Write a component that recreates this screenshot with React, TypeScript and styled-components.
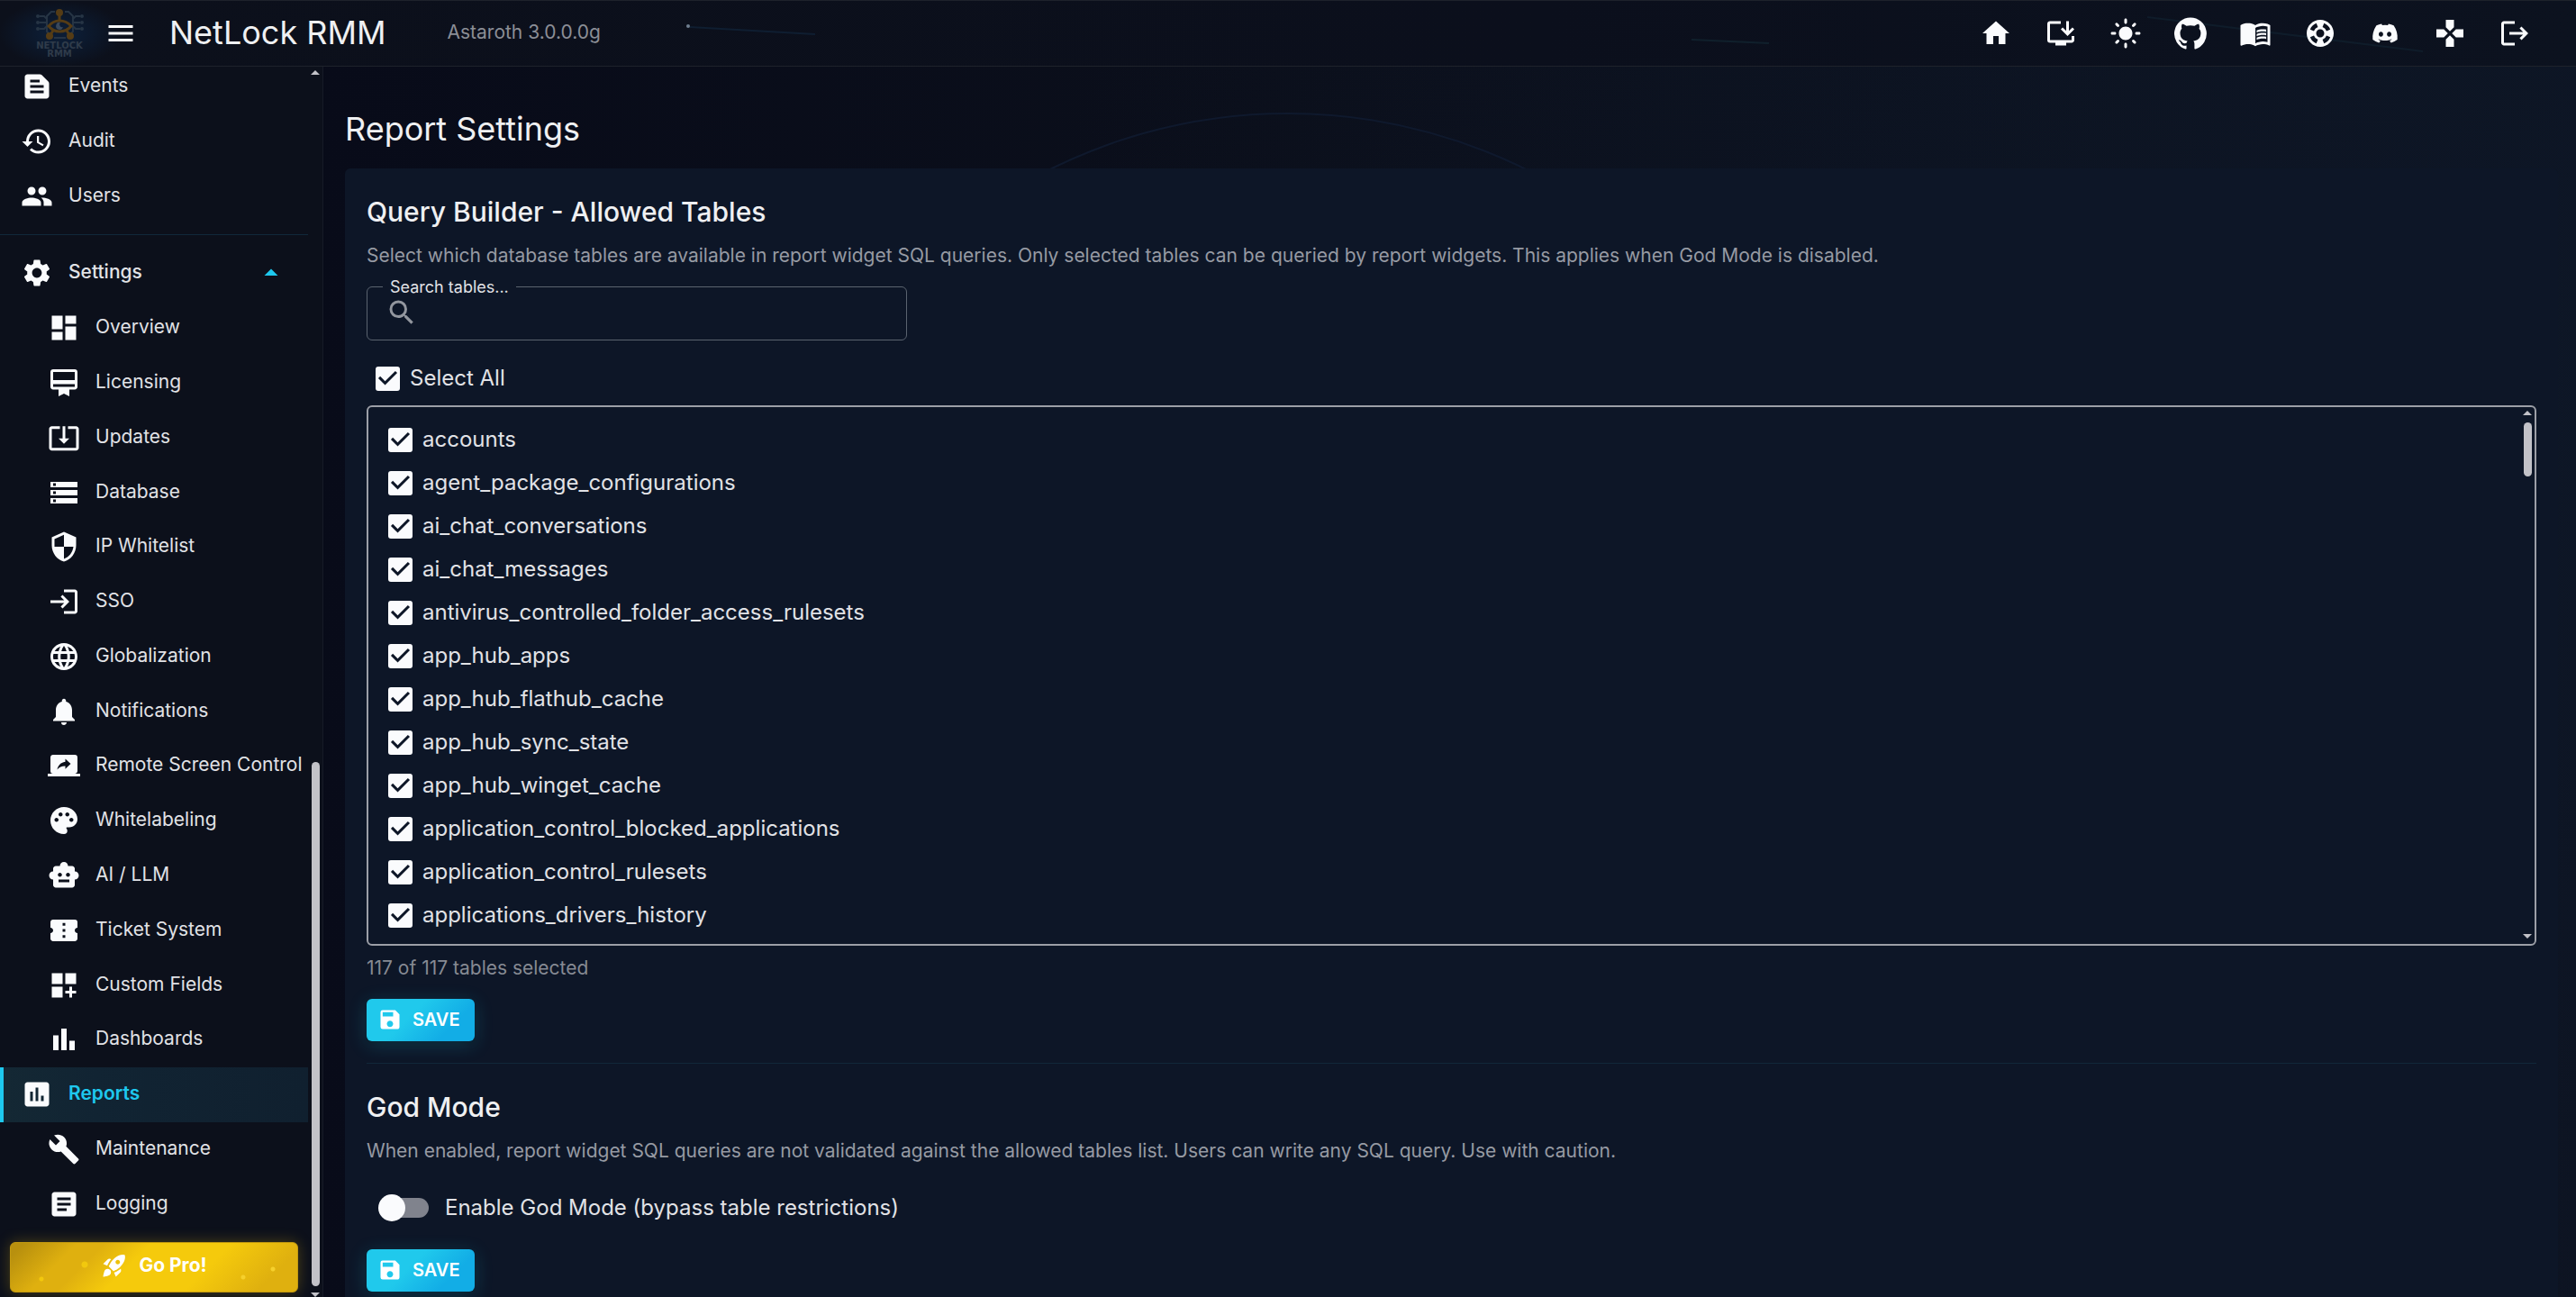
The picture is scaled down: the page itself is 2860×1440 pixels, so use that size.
import React, { useState } from "react";
import styled, { createGlobalStyle, css } from "styled-components";
import type { IconType } from "react-icons";
import {
  MdArrowDropUp,
  MdArticle,
  MdAssessment,
  MdBarChart,
  MdBuild,
  MdCardMembership,
  MdConfirmationNumber,
  MdDashboard,
  MdDashboardCustomize,
  MdGames,
  MdHistory,
  MdHome,
  MdInstallDesktop,
  MdLanguage,
  MdLightMode,
  MdLogin,
  MdLogout,
  MdMenu,
  MdMenuBook,
  MdNotifications,
  MdPalette,
  MdPeople,
  MdRocketLaunch,
  MdSave,
  MdScreenShare,
  MdSearch,
  MdSecurity,
  MdSettings,
  MdSmartToy,
  MdStorage,
  MdSupport,
  MdSystemUpdateAlt,
  MdTextSnippet,
} from "react-icons/md";
import { FaDiscord } from "react-icons/fa";

const color = {
  text: "#e1e2e6",
  heading: "#eff0f2",
  muted: "#969aa3",
  faint: "#868a93",
  icon: "#fafbfd",
  accent: "#1ec8ee",
  bar: "#0c101b",
  card: "#0d1627",
  line: "#1e222b",
  tint: "#11283a",
  scroll: "#c2c2c8",
};

const GlobalStyle = createGlobalStyle`
  *, *::before, *::after { box-sizing: border-box; }
  body {
    margin: 0;
    background: #090c1a;
    color: ${color.text};
    font-family: Inter, "Liberation Sans", sans-serif;
    font-size: 21px;
    line-height: 30px;
  }
  button, input { font: inherit; color: inherit; }
  h1, h2, p, ul { margin: 0; padding: 0; }
  ul { list-style: none; }
`;

const Shell = styled.div`
  position: relative;
  display: flex;
  flex-direction: column;
  height: 100vh;
  overflow: hidden;
  background:
    radial-gradient(ellipse 60% 90% at 100% 30%, rgba(14, 25, 42, 0.6), transparent),
    linear-gradient(90deg, #080b19 12%, #0b0f1b 50%, #0d1321 100%);
`;

const Ring = styled.div`
  position: absolute;
  top: 50%;
  left: 50%;
  width: 1190px;
  height: 1190px;
  border: 2px solid #0f192d;
  border-radius: 50%;
  transform: translate(-50%, -50%);
`;

const TopBar = styled.header`
  position: relative;
  display: flex;
  align-items: center;
  flex: none;
  height: 74px;
  padding: 0 32px 0 30px;
  background: linear-gradient(90deg, #0c101b, #0b0f1c 60%, #0c121f);
  border-top: 1px solid ${color.line};
  border-bottom: 1px solid ${color.line};
`;

const LogoGlow = styled.div`
  position: absolute;
  inset: 0 auto 0 0;
  width: 134px;
  background: radial-gradient(ellipse at center, #0c1c33 20%, rgba(12, 28, 51, 0) 72%);
`;

const Streaks = styled.svg`
  position: absolute;
  inset: 0;
  width: 100%;
  height: 100%;
  pointer-events: none;
`;

const Logo = styled.svg`
  position: relative;
  width: 72px;
  height: 60px;
  flex: none;
`;

const IconButton = styled.button<{ $width: number }>`
  position: relative;
  display: flex;
  align-items: center;
  justify-content: center;
  width: ${(p) => p.$width}px;
  height: 60px;
  padding: 0;
  border: 0;
  background: none;
  color: ${color.icon};
  cursor: pointer;
`;

const Brand = styled.div`
  padding: 0 0 2px 22px;
  font-size: 36px;
  line-height: 48px;
  color: ${color.heading};
`;

const Version = styled.div`
  flex: 1;
  padding: 0 0 2px 68px;
  color: #8b8e96;
`;

const Body = styled.div`
  position: relative;
  display: flex;
  flex: 1;
  min-height: 0;
`;

const Sidebar = styled.aside`
  display: flex;
  flex: none;
  width: 359px;
  overflow: hidden;
  background: ${color.bar};
  border-right: 1px solid #161b27;
`;

const SideContent = styled.nav`
  display: flex;
  flex-direction: column;
  flex: 1;
  min-width: 0;
  min-height: 0;
  margin-top: -9px;
  padding-bottom: 5px;
`;

const NavList = styled.ul<{ $fill?: boolean }>`
  display: flex;
  flex-direction: column;
  flex: ${(p) => (p.$fill ? "1" : "none")};
`;

const NavItem = styled.li<{ $height: number }>`
  display: flex;
  flex: 1 0 auto;
  min-height: ${(p) => p.$height}px;
`;

const NavLink = styled.a<{ $nested?: boolean; $active?: boolean; $strong?: boolean }>`
  display: flex;
  align-items: center;
  flex: 1;
  gap: 17px;
  padding-left: ${(p) => (p.$nested ? 53 : 23)}px;
  color: ${color.text};
  font-weight: ${(p) => (p.$strong ? 500 : 400)};
  text-decoration: none;
  white-space: nowrap;
  svg { flex: none; color: ${color.icon}; }
  ${(p) =>
    p.$active &&
    css`
      padding-left: 19px;
      border-left: 4px solid ${color.accent};
      background: linear-gradient(90deg, #142834, #112433 30%, #10202f);
      color: ${color.accent};
      font-weight: 600;
    `}
`;

const NavText = styled.span`
  flex: 1;
  padding-bottom: 2px;
`;

const Caret = styled.span`
  display: flex;
  padding-right: 23px;
  svg { color: ${color.accent}; }
`;

const Rule = styled.hr<{ $gap: number }>`
  width: 100%;
  height: 1px;
  margin: ${(p) => p.$gap}px 0;
  border: 0;
  background: ${color.tint};
`;

const GoPro = styled.button`
  position: relative;
  display: flex;
  align-items: center;
  justify-content: center;
  gap: 12px;
  height: 56px;
  margin: 12px 11px 0;
  padding: 0 0 4px;
  border: 1px solid #c49a10;
  border-radius: 6px;
  background:
    radial-gradient(circle at 34px 40px, #f2c80d 2px, transparent 3px),
    radial-gradient(circle at 82px 24px, #f2c80d 3px, transparent 4px),
    radial-gradient(circle at 258px 38px, #f6d02c 2px, transparent 3px),
    radial-gradient(circle at 291px 29px, #f6d02c 2px, transparent 3px),
    linear-gradient(135deg, #b8900e 4%, #dfb00f 20%, #dfb00f 28%, #f5ca0c 42%, #f5ca0c 66%, #dfb00f 88%);
  box-shadow: 0 0 16px rgba(222, 176, 16, 0.3);
  color: #fff;
  font-weight: 700;
  cursor: pointer;
`;

const Track = styled.div`
  display: flex;
  flex-direction: column;
  align-items: center;
  flex: none;
  width: 16px;
  padding: 4px 0 0;
`;

const Arrow = styled.i<{ $down?: boolean }>`
  flex: none;
  border: 5px solid transparent;
  border-top: ${(p) => (p.$down ? `5px solid ${color.scroll}` : "0")};
  border-bottom: ${(p) => (p.$down ? "0" : `5px solid ${color.scroll}`)};
`;

const Spacer = styled.div<{ $grow: number }>`
  flex: ${(p) => p.$grow} 1 0;
`;

const Thumb = styled.div<{ $grow: number }>`
  flex: ${(p) => p.$grow} 1 0;
  width: 9px;
  border-radius: 5px;
  background: ${color.scroll};
`;

const Main = styled.main`
  display: flex;
  flex-direction: column;
  flex: 1;
  min-width: 0;
  padding: 41px 20px 0 24px;
`;

const PageTitle = styled.h1`
  margin-bottom: 15px;
  font-size: 36px;
  font-weight: 400;
  line-height: 57px;
  color: ${color.heading};
`;

const Card = styled.section`
  flex: 1 0 auto;
  padding: 24px;
  border-radius: 6px;
  background: ${color.card};
`;

const SectionTitle = styled.h2`
  font-size: 30px;
  font-weight: 500;
  line-height: 48px;
  color: ${color.heading};
`;

const Hint = styled.p`
  margin-top: 10px;
  color: ${color.muted};
`;

const SearchField = styled.div`
  position: relative;
  display: flex;
  align-items: center;
  width: 600px;
  height: 60px;
  margin-top: 19px;
  padding: 0 20px;
  border: 1px solid #5a636f;
  border-radius: 6px;
  svg { flex: none; margin-bottom: 2px; color: #92969e; }
`;

const SearchLabel = styled.label`
  position: absolute;
  top: -14px;
  left: 17px;
  padding: 0 8px;
  background: ${color.card};
  font-size: 18px;
  line-height: 28px;
`;

const SearchInput = styled.input`
  flex: 1;
  min-width: 0;
  padding: 0 8px;
  border: 0;
  outline: 0;
  background: transparent;
`;

const CheckRow = styled.label`
  display: flex;
  align-items: center;
  gap: 11px;
  height: 48px;
  font-size: 24px;
  cursor: pointer;
`;

const SelectAll = styled.div`
  display: flex;
  margin: 18px 0 6px;
  padding-left: 10px;
`;

const Tick = styled.input`
  appearance: none;
  flex: none;
  width: 27px;
  height: 27px;
  margin: 0;
  border: 3px solid ${color.icon};
  border-radius: 3px;
  cursor: pointer;
  &:checked { border: 0; background: ${color.icon}; }
  &:checked::before {
    content: "";
    display: block;
    width: 100%;
    height: 100%;
    background: ${color.card};
    clip-path: polygon(39% 78%, 11% 50%, 19% 42%, 39% 62%, 81% 20%, 89% 28%);
  }
`;

const TableBox = styled.div`
  display: flex;
  height: 600px;
  overflow: hidden;
  border: 2px solid #9c9fa7;
  border-radius: 6px;
`;

const TableList = styled.ul`
  flex: 1;
  padding: 12px 22px;
`;

const Count = styled.p`
  margin-top: 10px;
  color: ${color.faint};
`;

const SaveButton = styled.button`
  display: flex;
  align-items: center;
  gap: 11px;
  width: 120px;
  height: 47px;
  margin-top: 19px;
  padding: 0 0 2px 12px;
  border: 0;
  border-radius: 6px;
  background: linear-gradient(135deg, #20c9ec 40%, #12ade6 75%);
  box-shadow: 0 4px 20px rgba(30, 200, 238, 0.22), 0 3px 6px rgba(0, 0, 0, 0.35);
  color: #fff;
  font-size: 20px;
  font-weight: 600;
  cursor: pointer;
`;

const SwitchRow = styled.label`
  display: flex;
  align-items: center;
  gap: 18px;
  height: 48px;
  margin: 24px 0 22px;
  padding-left: 18px;
  font-size: 24px;
  cursor: pointer;
`;

const Switch = styled.input`
  appearance: none;
  flex: none;
  display: flex;
  align-items: center;
  width: 51px;
  height: 22px;
  margin: 0;
  border-radius: 11px;
  background: #80838d;
  cursor: pointer;
  &::before {
    content: "";
    width: 30px;
    height: 30px;
    flex: none;
    margin-left: -5px;
    border-radius: 50%;
    background: ${color.icon};
  }
  &:checked { background: ${color.accent}; }
  &:checked::before { margin-left: 26px; }
`;

const GithubMark = () => (
  <svg viewBox="0 0 24 24" width="36" height="36" fill="currentColor" aria-hidden="true">
    <path d="M12 .3a12 12 0 0 0-3.8 23.38c.6.12.83-.26.83-.57L9 21.07c-3.34.72-4.04-1.61-4.04-1.61-.55-1.39-1.34-1.76-1.34-1.76-1.08-.74.09-.73.09-.73 1.2.09 1.83 1.24 1.83 1.24 1.08 1.83 2.81 1.3 3.5 1 .1-.78.42-1.31.76-1.61-2.67-.3-5.47-1.33-5.47-5.93 0-1.31.47-2.38 1.24-3.22-.14-.3-.54-1.52.1-3.18 0 0 1-.32 3.3 1.23a11.5 11.5 0 0 1 6 0c2.28-1.55 3.29-1.23 3.29-1.23.64 1.66.24 2.88.12 3.18a4.65 4.65 0 0 1 1.23 3.22c0 4.61-2.8 5.63-5.48 5.92.42.36.81 1.1.81 2.22l-.01 3.29c0 .31.2.69.82.57A12 12 0 0 0 12 .3" />
  </svg>
);

const BrandLogo = () => (
  <Logo viewBox="0 0 72 60" role="img" aria-label="NetLock RMM">
    <g fill="none" stroke="#263444" strokeWidth="2">
      <path d="M31 6h-4l-5 5v17l3 3M42 6h4l5 5v17l-3 3M30 35h13" />
      <path d="M14 11h5l3 3M14 18h8M14 25h5l3-3M59 11h-5l-3 3M59 18h-8M59 25h-5l-3-3" />
    </g>
    <g fill="#263444">
      <circle cx="12" cy="11" r="2" />
      <circle cx="12" cy="18" r="2" />
      <circle cx="12" cy="25" r="2" />
      <circle cx="61" cy="11" r="2" />
      <circle cx="61" cy="18" r="2" />
      <circle cx="61" cy="25" r="2" />
    </g>
    <g fill="none" stroke="#553c15" strokeWidth="3">
      <path d="M24 22q5-6 12-6q8 0 13 6q-5 6-13 6q-7 0-12-6z" />
      <path d="M36 8v9M29 27l-4 6M44 27l4 6" />
    </g>
    <g fill="#553c15">
      <circle cx="36" cy="7" r="4" />
      <circle cx="25" cy="33" r="4" />
      <circle cx="48" cy="33" r="4" />
    </g>
    <path d="M37 18a4 4 0 1 0 3 5a3 3 0 0 1-3-5z" fill="#39485a" />
    <g
      fill="#2f3b4a"
      fontFamily="DejaVu Sans, sans-serif"
      fontWeight="700"
      fontSize="10"
      textAnchor="middle"
    >
      <text x="36" y="47">NETLOCK</text>
      <text x="36" y="56">RMM</text>
    </g>
  </Logo>
);

const toolbar: { label: string; icon: React.ReactNode }[] = [
  { label: "Home", icon: <MdHome size={36} /> },
  { label: "Install", icon: <MdInstallDesktop size={36} /> },
  { label: "Light mode", icon: <MdLightMode size={36} /> },
  { label: "GitHub", icon: <GithubMark /> },
  { label: "Documentation", icon: <MdMenuBook size={36} /> },
  { label: "Support", icon: <MdSupport size={36} /> },
  { label: "Discord", icon: <FaDiscord size={30} /> },
  { label: "Games", icon: <MdGames size={36} /> },
  { label: "Log out", icon: <MdLogout size={36} /> },
];

const topLinks: [string, IconType][] = [
  ["Events", MdTextSnippet],
  ["Audit", MdHistory],
  ["Users", MdPeople],
];

const settingsLinks: [string, IconType][] = [
  ["Overview", MdDashboard],
  ["Licensing", MdCardMembership],
  ["Updates", MdSystemUpdateAlt],
  ["Database", MdStorage],
  ["IP Whitelist", MdSecurity],
  ["SSO", MdLogin],
  ["Globalization", MdLanguage],
  ["Notifications", MdNotifications],
  ["Remote Screen Control", MdScreenShare],
  ["Whitelabeling", MdPalette],
  ["AI / LLM", MdSmartToy],
  ["Ticket System", MdConfirmationNumber],
  ["Custom Fields", MdDashboardCustomize],
  ["Dashboards", MdBarChart],
  ["Reports", MdAssessment],
  ["Maintenance", MdBuild],
  ["Logging", MdArticle],
];

const tables = [
  "accounts",
  "agent_package_configurations",
  "ai_chat_conversations",
  "ai_chat_messages",
  "antivirus_controlled_folder_access_rulesets",
  "app_hub_apps",
  "app_hub_flathub_cache",
  "app_hub_sync_state",
  "app_hub_winget_cache",
  "application_control_blocked_applications",
  "application_control_rulesets",
  "applications_drivers_history",
];

const Save = () => (
  <SaveButton type="button">
    <MdSave size={28} />
    SAVE
  </SaveButton>
);

export default function App() {
  const [selected, setSelected] = useState<string[]>(tables);
  const [godMode, setGodMode] = useState(false);
  const toggle = (name: string) =>
    setSelected((s) => (s.includes(name) ? s.filter((n) => n !== name) : [...s, name]));

  return (
    <Shell>
      <GlobalStyle />
      <Ring />
      <TopBar>
        <LogoGlow />
        <Streaks aria-hidden="true">
          <path d="M766 29L905 37" stroke="#0f1e31" strokeWidth="2" />
          <circle cx="764" cy="28" r="2" fill="#6f7f90" />
          <path d="M1878 43L1964 47" stroke="#10202c" strokeWidth="2" />
          <path d="M2384 18L2690 56" stroke="#0f1c2a" strokeWidth="2" />
        </Streaks>
        <BrandLogo />
        <IconButton type="button" aria-label="Toggle menu" $width={64}>
          <MdMenu size={36} />
        </IconButton>
        <Brand>NetLock RMM</Brand>
        <Version>Astaroth 3.0.0.0g</Version>
        {toolbar.map((t) => (
          <IconButton key={t.label} type="button" aria-label={t.label} $width={72}>
            {t.icon}
          </IconButton>
        ))}
      </TopBar>
      <Body>
        <Sidebar>
          <SideContent>
            <NavList>
              {topLinks.map(([label, Icon]) => (
                <NavItem key={label} $height={61}>
                  <NavLink href="#">
                    <Icon size={36} />
                    <NavText>{label}</NavText>
                  </NavLink>
                </NavItem>
              ))}
            </NavList>
            <Rule $gap={12} />
            <NavList $fill>
              <NavItem $height={60}>
                <NavLink href="#" $strong>
                  <MdSettings size={36} />
                  <NavText>Settings</NavText>
                  <Caret>
                    <MdArrowDropUp size={36} />
                  </Caret>
                </NavLink>
              </NavItem>
              {settingsLinks.map(([label, Icon]) => (
                <NavItem key={label} $height={60}>
                  <NavLink href="#" $nested={label !== "Reports"} $active={label === "Reports"}>
                    <Icon size={36} />
                    <NavText>{label}</NavText>
                  </NavLink>
                </NavItem>
              ))}
            </NavList>
            <GoPro type="button">
              <MdRocketLaunch size={30} />
              Go Pro!
            </GoPro>
          </SideContent>
          <Track>
            <Arrow />
            <Spacer $grow={764} />
            <Thumb $grow={583} />
            <Spacer $grow={7} />
            <Arrow $down />
          </Track>
        </Sidebar>
        <Main>
          <PageTitle>Report Settings</PageTitle>
          <Card>
            <SectionTitle>Query Builder - Allowed Tables</SectionTitle>
            <Hint>
              Select which database tables are available in report widget SQL queries. Only selected
              tables can be queried by report widgets. This applies when God Mode is disabled.
            </Hint>
            <SearchField>
              <SearchLabel htmlFor="table-search">Search tables...</SearchLabel>
              <MdSearch size={36} />
              <SearchInput id="table-search" type="text" />
            </SearchField>
            <SelectAll>
              <CheckRow>
                <Tick
                  type="checkbox"
                  checked={selected.length === tables.length}
                  onChange={(e) => setSelected(e.target.checked ? tables : [])}
                />
                Select All
              </CheckRow>
            </SelectAll>
            <TableBox>
              <TableList>
                {tables.map((name) => (
                  <li key={name}>
                    <CheckRow>
                      <Tick
                        type="checkbox"
                        checked={selected.includes(name)}
                        onChange={() => toggle(name)}
                      />
                      {name}
                    </CheckRow>
                  </li>
                ))}
              </TableList>
              <Track>
                <Arrow />
                <Spacer $grow={8} />
                <Thumb $grow={60} />
                <Spacer $grow={510} />
                <Arrow $down />
                <Spacer $grow={6} />
              </Track>
            </TableBox>
            <Count>117 of 117 tables selected</Count>
            <Save />
            <Rule $gap={24} />
            <SectionTitle>God Mode</SectionTitle>
            <Hint>
              When enabled, report widget SQL queries are not validated against the allowed tables
              list. Users can write any SQL query. Use with caution.
            </Hint>
            <SwitchRow>
              <Switch
                type="checkbox"
                role="switch"
                checked={godMode}
                onChange={(e) => setGodMode(e.target.checked)}
              />
              Enable God Mode (bypass table restrictions)
            </SwitchRow>
            <Save />
          </Card>
        </Main>
      </Body>
    </Shell>
  );
}
